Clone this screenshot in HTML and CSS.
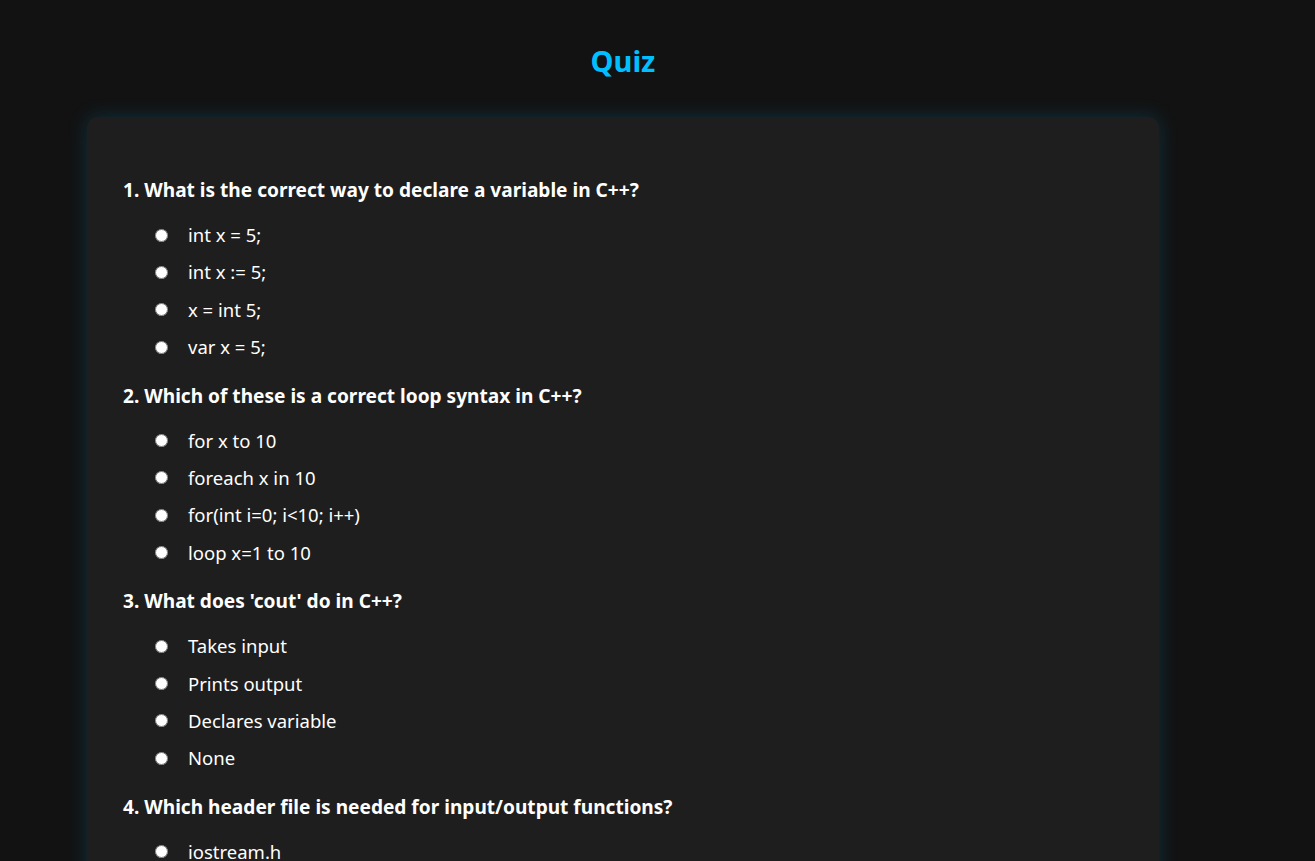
FILE: index.html
```html
<!DOCTYPE html>
<html lang="en">
<head>
<meta charset="utf-8">
<title>Quiz</title>
<link rel="stylesheet" href="styles.css">
</head>
<body>
<div class="page">
  <h1 class="title">Quiz</h1>
  <form class="card">
    <div class="question">
      <p class="q-text">1. What is the correct way to declare a variable in C++?</p>
      <ul class="options">
        <li class="option"><input type="radio" name="q1" class="radio"><span class="opt-label">int x = 5;</span></li>
        <li class="option"><input type="radio" name="q1" class="radio"><span class="opt-label">int x := 5;</span></li>
        <li class="option"><input type="radio" name="q1" class="radio"><span class="opt-label">x = int 5;</span></li>
        <li class="option"><input type="radio" name="q1" class="radio"><span class="opt-label">var x = 5;</span></li>
      </ul>
    </div>
    <div class="question">
      <p class="q-text">2. Which of these is a correct loop syntax in C++?</p>
      <ul class="options">
        <li class="option"><input type="radio" name="q2" class="radio"><span class="opt-label">for x to 10</span></li>
        <li class="option"><input type="radio" name="q2" class="radio"><span class="opt-label">foreach x in 10</span></li>
        <li class="option"><input type="radio" name="q2" class="radio"><span class="opt-label">for(int i=0; i&lt;10; i++)</span></li>
        <li class="option"><input type="radio" name="q2" class="radio"><span class="opt-label">loop x=1 to 10</span></li>
      </ul>
    </div>
    <div class="question">
      <p class="q-text">3. What does 'cout' do in C++?</p>
      <ul class="options">
        <li class="option"><input type="radio" name="q3" class="radio"><span class="opt-label">Takes input</span></li>
        <li class="option"><input type="radio" name="q3" class="radio"><span class="opt-label">Prints output</span></li>
        <li class="option"><input type="radio" name="q3" class="radio"><span class="opt-label">Declares variable</span></li>
        <li class="option"><input type="radio" name="q3" class="radio"><span class="opt-label">None</span></li>
      </ul>
    </div>
    <div class="question">
      <p class="q-text">4. Which header file is needed for input/output functions?</p>
      <ul class="options">
        <li class="option"><input type="radio" name="q4" class="radio"><span class="opt-label">iostream.h</span></li>
        <li class="option"><input type="radio" name="q4" class="radio"><span class="opt-label">stdio.h</span></li>
        <li class="option"><input type="radio" name="q4" class="radio"><span class="opt-label">conio.h</span></li>
        <li class="option"><input type="radio" name="q4" class="radio"><span class="opt-label">math.h</span></li>
      </ul>
    </div>
  </form>
</div>
</body>
</html>
```
FILE: styles.css
```css
html, body {
  margin: 0;
  padding: 0;
  background: #121212;
  color: #ffffff;
  font-family: "Noto Sans", "Open Sans", Arial, sans-serif;
}
.page {
  width: 1072px;
  margin-left: 87px;
  padding-top: 40px;
}
.title {
  margin: 0;
  height: 44px;
  line-height: 42px;
  text-align: center;
  color: #00bfff;
  font-size: 29px;
  font-weight: 700;
}
.card {
  margin-top: 33px;
  background: #1e1e1e;
  border-radius: 10px;
  box-shadow: 0 0 20px rgba(0, 191, 255, 0.18);
  padding: 50px 36px 40px;
}
.question {
  padding-top: 11px;
}
.q-text {
  margin: 0 0 21px;
  font-size: 19.1px;
  line-height: 24px;
  font-weight: 700;
}
.options {
  list-style: none;
  margin: 0;
  padding: 0 0 0 32px;
}
.option {
  display: flex;
  align-items: center;
  height: 24px;
  margin-bottom: 13.4px;
  font-size: 18.5px;
}
.radio {
  width: 13px;
  height: 13px;
  margin: 0 20px 0 0;
  flex: none;
}
.opt-label {
  line-height: 24px;
}
```
